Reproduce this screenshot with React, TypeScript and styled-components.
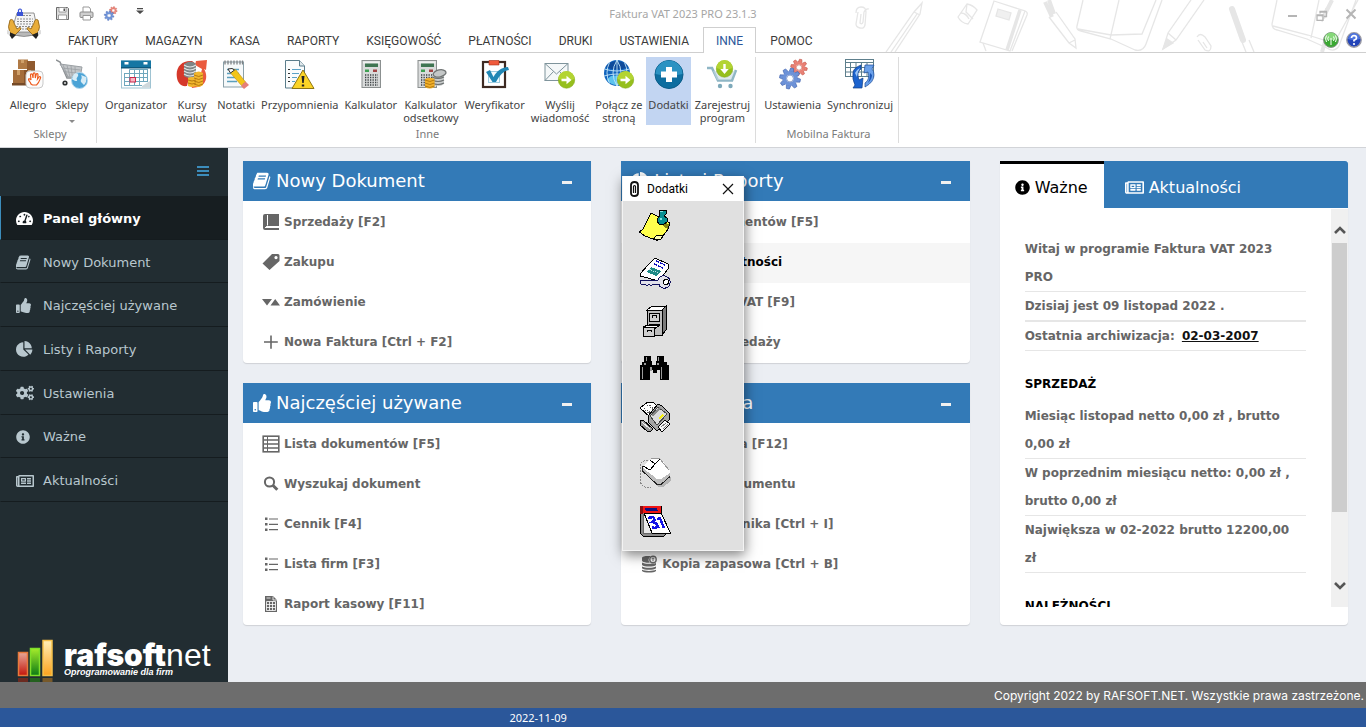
import React from 'react';
import styled, { createGlobalStyle } from 'styled-components';
import {
  FaTachometerAlt,
  FaThumbsUp,
  FaCogs,
  FaInfoCircle,
  FaRegNewspaper,
} from 'react-icons/fa';

const uiFont = "Roboto, 'Noto Sans', sans-serif";
const labelFont = "'Noto Sans', Roboto, sans-serif";
const bodyFont = "'DejaVu Sans', Verdana, sans-serif";

const GlobalStyle = createGlobalStyle`
  *, *::before, *::after { box-sizing: border-box; }
  body { margin: 0; font-family: ${bodyFont}; font-size: 13px; }
  button { border: 0; padding: 0; margin: 0; background: none; color: inherit; font: inherit; }
  ul { list-style: none; margin: 0; padding: 0; }
  h1, h2, h3, p { margin: 0; font-weight: 400; }
  svg { display: block; flex: none; }
`;

/* ---------- layout ---------- */

const Shell = styled.div`
  position: relative;
  display: flex;
  flex-direction: column;
  min-height: 100vh;
`;

const Header = styled.header`
  position: relative;
  display: grid;
  grid-template-columns: 53px 1fr;
  grid-template-rows: 27px 26px;
  background: #fff;
  box-shadow: inset 0 -1px 0 #cfcfcf;
  font-family: ${uiFont};
`;

const HeaderArt = styled.svg`
  position: absolute;
  right: 0;
  top: 0;
`;

const AppButton = styled.button`
  grid-area: 1 / 1 / 3 / 2;
  padding: 6px 0 0 7px;
  align-self: start;
  z-index: 1;
`;

const TitleRow = styled.div`
  grid-area: 1 / 1 / 2 / 3;
  position: relative;
  display: grid;
  grid-template-columns: 1fr auto 1fr;
  align-items: center;
`;

const QuickAccess = styled.div`
  display: flex;
  align-items: center;
  gap: 9px;
  padding-left: 55px;
`;

const QuickMore = styled.button`
  margin-left: 9px;
  padding-bottom: 6px;
`;

const WindowTitle = styled.h1`
  font-family: ${labelFont};
  font-size: 11px;
  line-height: 27px;
  color: #a6a6a6;
`;

const WindowButtons = styled.div`
  display: flex;
  justify-content: flex-end;
  gap: 15px;
  padding-right: 8px;
`;

const TabRow = styled.nav`
  position: relative;
  display: flex;
  align-items: stretch;
  gap: 1px;
  padding: 0 4px 0 2px;
`;

const RibbonTab = styled.button<{ $active?: boolean }>`
  padding: 0 12px;
  font-size: 12px;
  line-height: 26px;
  border: 1px solid ${(p) => (p.$active ? '#cfcfcf' : 'transparent')};
  border-bottom: 0;
  background: ${(p) => (p.$active ? '#fff' : 'transparent')};
  color: ${(p) => (p.$active ? '#2b579a' : '#3b3b3b')};
`;

const HelpButtons = styled.div`
  display: flex;
  align-items: center;
  gap: 7px;
  margin-left: auto;
  padding-bottom: 1px;
`;

const Ribbon = styled.section`
  display: flex;
  height: 95px;
  padding: 4px 0 4px 1px;
  background: #fff;
  border-bottom: 1px solid #d2d4d8;
  font-family: ${labelFont};
`;

const RibbonGroup = styled.div`
  display: flex;
  flex-direction: column;
  justify-content: space-between;
  padding: 0 3px 0 6px;
  border-right: 1px solid #dcdcdc;
`;

const RibbonItems = styled.div`
  display: flex;
  gap: 2px;
`;

const RibbonCaption = styled.div`
  font-size: 11px;
  line-height: 18px;
  padding-bottom: 1px;
  text-align: center;
  color: #7b7b7b;
`;

const RibbonButton = styled.button<{ $active?: boolean }>`
  display: flex;
  flex-direction: column;
  align-items: center;
  min-width: 42px;
  height: 68px;
  padding: 1px 2px 0;
  background: ${(p) => (p.$active ? '#c2d5f2' : 'transparent')};
  color: #444;
`;

const RibbonLabel = styled.span`
  padding-top: 8px;
  font-size: 11px;
  line-height: 13px;
  text-align: center;
  white-space: pre;
`;

const Workspace = styled.div`
  display: flex;
  flex: 1;
`;

const Sidebar = styled.aside`
  display: flex;
  flex-direction: column;
  flex: none;
  width: 228px;
  background: #222d32;
`;

const MenuToggle = styled.button`
  align-self: flex-end;
  height: 48px;
  padding: 0 19px 2px;
`;

const SideMenu = styled.ul`
  display: grid;
  grid-auto-rows: 1fr;
  height: 306px;
`;

const SideItem = styled.li`
  display: flex;
`;

const SideLink = styled.a<{ $active?: boolean }>`
  display: grid;
  grid-template-columns: 27px 1fr;
  align-items: center;
  flex: 1;
  padding: 2px 0 0 15px;
  border-left: 1px solid ${(p) => (p.$active ? '#3c8dbc' : '#222d32')};
  border-bottom: 1px solid #151c1f;
  background: ${(p) => (p.$active ? '#171e21' : '#222d32')};
  color: ${(p) => (p.$active ? '#fff' : '#b8c7ce')};
  font-weight: ${(p) => (p.$active ? 700 : 400)};
  text-decoration: none;
`;

const Brand = styled.div`
  display: flex;
  align-items: flex-end;
  gap: 11px;
  margin-top: auto;
  padding-left: 17px;
`;

const BrandText = styled.div`
  padding-bottom: 4px;
  color: #fff;
`;

const BrandName = styled.div`
  font: 900 30px/24px Inter, sans-serif;
`;

const BrandLight = styled.span`
  font: 400 32px/24px 'Liberation Sans', sans-serif;
`;

const BrandTag = styled.div`
  font: italic 700 9px/11px 'Liberation Sans', sans-serif;
`;

const Main = styled.main`
  display: grid;
  grid-template-columns: repeat(3, minmax(0, 1fr));
  gap: 20px 30px;
  align-content: start;
  flex: 1;
  padding: 13px 18px 20px 15px;
  background: #ebeef3;
`;

const Card = styled.section`
  display: flex;
  flex-direction: column;
  background: #fff;
  border-radius: 0 0 4px 4px;
  box-shadow: 0 1px 1px rgba(0, 0, 0, 0.12);
`;

const CardHeader = styled.header`
  display: flex;
  align-items: center;
  gap: 5px;
  height: 40px;
  padding: 0 19px 0 10px;
  background: #337ab7;
  color: #fff;
`;

const CardTitle = styled.h2`
  flex: 1;
  font-size: 18px;
  line-height: 24px;
`;

const CollapseButton = styled.button`
  padding: 10px 0 8px;
`;

const CollapseMark = styled.span`
  display: block;
  width: 10px;
  height: 3px;
  background: #f0f0f0;
`;

const CardList = styled.ul`
  padding-top: 2px;
`;

const CardItem = styled.li<{ $hover?: boolean }>`
  display: flex;
  height: 40px;
  background: ${(p) => (p.$hover ? '#f6f6f6' : 'transparent')};
`;

const CardLink = styled.a<{ $hover?: boolean }>`
  display: flex;
  align-items: center;
  gap: 4px;
  flex: 1;
  padding: 0 19px 2px;
  font-size: 12px;
  font-weight: 700;
  line-height: 18px;
  color: ${(p) => (p.$hover ? '#000' : '#666')};
  text-decoration: none;
`;

const NewsCard = styled(Card)`
  grid-column: 3;
  grid-row: 1 / span 2;
  padding-bottom: 18px;
`;

const NewsTabs = styled.div`
  display: flex;
  height: 47px;
  background: #337ab7;
  border-radius: 0 3px 0 0;
  margin-bottom: 1px;
`;

const NewsTab = styled.button<{ $active?: boolean }>`
  display: flex;
  align-items: center;
  gap: 5px;
  padding: ${(p) => (p.$active ? '2px 16px 0 15px' : '5px 21px 0')};
  border-top: ${(p) => (p.$active ? '3px solid #000' : '0')};
  background: ${(p) => (p.$active ? '#fff' : 'transparent')};
  color: ${(p) => (p.$active ? '#000' : '#fff')};
  font-size: 16px;
`;

const NewsScroller = styled.div`
  display: flex;
  flex: 1;
  contain: size;
  overflow: hidden;
`;

const NewsBody = styled.div`
  flex: 1;
  padding: 26px 25px 0;
  font-size: 12px;
  font-weight: 700;
  line-height: 28px;
  color: #666;
`;

const NewsLine = styled.p<{ $thick?: boolean }>`
  padding-right: 10px;
  font-weight: 700;
  border-bottom: ${(p) => (p.$thick ? 2 : 1)}px solid #e6e6e6;
`;

const NewsHeading = styled.h3`
  padding: 19px 0 4px;
  font-size: 12px;
  font-weight: 700;
  color: #000;
`;

const NewsLink = styled.a`
  margin-left: 3px;
  color: #111;
`;

const ScrollTrack = styled.div`
  display: flex;
  flex-direction: column;
  align-items: center;
  width: 17px;
  background: #f0f0f0;
`;

const ScrollButton = styled.button<{ $down?: boolean }>`
  padding: ${(p) => (p.$down ? '9px 2px 17px' : '17px 2px 9px')};
`;

const ScrollThumb = styled.div`
  flex: 0 1 269px;
  width: 15px;
  margin-bottom: auto;
  background: #cdcdcd;
`;

const Copyright = styled.footer`
  height: 26px;
  padding-right: 2px;
  background: #6d6d6d;
  color: #fff;
  font: 12px/27px Inter, sans-serif;
  text-align: right;
`;

const StatusBar = styled.div`
  display: grid;
  grid-template-columns: 37% 1fr;
  height: 19px;
  background: #2b579a;
  color: #fff;
  font: 11px/20px ${labelFont};
`;

const StatusDate = styled.span`
  grid-column: 2;
  padding-left: 4px;
`;

const ToolWindow = styled.section`
  position: absolute;
  left: 622px;
  top: 176px;
  width: 122px;
  background: #e0e0e0;
  border: 1px solid #f3f3f3;
  border-top: 0;
  box-shadow: 1px 4px 12px rgba(0, 0, 0, 0.5);
`;

const ToolTitleBar = styled.header`
  display: flex;
  align-items: center;
  height: 25px;
  padding: 0 9px 0 6px;
  gap: 7px;
  background: #fff;
`;

const ToolTitle = styled.h2`
  flex: 1;
  font: 12px/24px ${uiFont};
  color: #000;
`;

const ToolList = styled.div`
  display: grid;
  justify-items: start;
  gap: 16px;
  padding: 8px 16px 13px;
`;

const ToolButton = styled.button<{ $spaced?: boolean }>`
  margin-top: ${(p) => (p.$spaced ? 8 : 0)}px;
`;

/* ---------- small glyphs ---------- */

const BookSlant = ({ size = 16 }: { size?: number }) => (
  <svg width={size} height={size} viewBox="64 64 1664 1664" fill="currentColor">
    <path d="M1639 478q40 57 18 129l-275 906q-19 64-76.500 107.500t-122.500 43.500h-923q-77 0-148.500-53.500t-99.500-131.500q-24-67-2-127 0-4 3-27t4-37q1-8-3-21.500t-3-19.500q2-11 8-21t16.500-23.500 16.500-23.500q23-38 45-91.500t30-91.500q3-10 .5-30t-.5-28q3-11 17-28t17-23q21-36 42-92t25-90q1-9-2.500-32t.5-28q4-13 22-30.500t22-22.500q19-26 42.500-84.500t27.500-96.500q1-8-3-25.500t-2-26.500q2-8 9-18t18-23 17-21q8-12 16.500-30.500t15-35 16-36 19.500-32 26.500-23.500 36-11.500 47.500 5.500l-1 3q38-9 51-9h761q74 0 114 56t18 130l-274 906q-36 119-71.500 153.500t-128.500 34.500h-869q-27 0-38 15-11 16-1 43 24 70 144 70h923q29 0 56-15.500t35-41.500l300-987q7-22 5-57 38 15 59 43zm-1064 2q-4 13 2 22.500t20 9.500h608q13 0 25.500-9.500t16.500-22.500l21-64q4-13-2-22.500t-20-9.500h-608q-13 0-25.500 9.500t-16.500 22.500zm-83 256q-4 13 2 22.500t20 9.500h608q13 0 25.500-9.500t16.500-22.500l21-64q4-13-2-22.500t-20-9.500h-608q-13 0-25.500 9.500t-16.500 22.500z" />
  </svg>
);

const PieIcon = ({ size = 16 }: { size?: number }) => (
  <svg width={size} height={size} viewBox="0 0 1792 1792" fill="currentColor">
    <path d="M768 890l546 546q-106 108-247.500 168t-298.500 60q-209 0-385.500-103t-279.500-279.500-103-385.500 103-385.500 279.500-279.500 385.500-103v762zm187 6h773q0 157-60 298.500t-168 247.500zm709-128h-768v-768q209 0 385.500 103t279.500 279.500 103 385.500z" />
  </svg>
);

type GlyphName = 'book' | 'tag' | 'swap' | 'plus' | 'table' | 'search' | 'bullets' | 'sheet' | 'backup';

const glyphs: Record<GlyphName, React.ReactNode> = {
  book: (
    <>
      <path d="M3 1h14v12H4.500a1 1 0 0 0 0 1.800H17V17H3a2 2 0 0 1-2-2V3a2 2 0 0 1 2-2z" />
      <path d="M5.500 2v10.500M3 14.500h14" stroke="#fff" strokeWidth="1" />
    </>
  ),
  tag: <path fillRule="evenodd" d="M10 1h6a1.500 1.500 0 0 1 1.500 1.500V8L7.500 17 .5 10.500zM14 3a1.600 1.600 0 1 0 .01 0z" />,
  swap: <path d="M0 6h10L5 12.500zM8.500 12.500h9.500L13.200 6z" />,
  plus: <path d="M8.200 2.500h1.600V8.200h6v1.600h-6v6H8.200v-6H2V8.200h6.200z" />,
  table: (
    <>
      <rect x="1.200" y="1.200" width="15.600" height="15.600" fill="none" stroke="currentColor" strokeWidth="1.600" />
      <path d="M1 5h16M1 9h16M1 13h16" stroke="currentColor" strokeWidth="1.500" />
      <path d="M5.500 1v16" stroke="currentColor" />
    </>
  ),
  search: (
    <>
      <circle cx="7.500" cy="7" r="4.600" fill="none" stroke="currentColor" strokeWidth="2" />
      <path d="M10.800 10.300l4.500 4.500" stroke="currentColor" strokeWidth="3" />
    </>
  ),
  bullets: (
    <>
      <path d="M3 2.500h2.500V5H3zM3 8h2.500v2.500H3zM3 13.500h2.500V16H3z" />
      <path d="M7 4h9M7 9.300h9M7 14.600h9" stroke="currentColor" strokeWidth="1.200" />
    </>
  ),
  sheet: (
    <>
      <path d="M3 1h8l4 4v12H3z" />
      <path d="M11 1.500V5h4M4.500 3h4M4.500 6.500h9v9h-9zM4.500 9.500h9M4.500 12.500h9M7.500 6.500v9M10.500 6.500v9" fill="none" stroke="#fff" strokeWidth=".8" />
    </>
  ),
  backup: (
    <>
      <path d="M2 3c0-2 7-2.500 9-1.500C8 3 8 6 10 7.500c-3 .6-8 0-8-2zM2 7.500C4 9 10 9 12 8.500c1 .2 3 0 4-.5v2c-2 2-12 2-14 0zM2 11.500c3 1.700 11 1.700 14 0v1.800c-2 2-12 2-14 0zM2 14.800c3 1.500 11 1.500 14 0V16c-2 2-12 2-14 0z" />
      <circle cx="13" cy="4.500" r="3.200" fill="none" stroke="currentColor" strokeWidth="1.400" />
      <path d="M13 2.800v3.400M11.500 4.200L13 2.700l1.500 1.500" fill="none" stroke="currentColor" />
    </>
  ),
};

const Glyph = ({ name }: { name: GlyphName }) => (
  <svg width="18" height="18" viewBox="0 0 18 18" fill="currentColor">
    {glyphs[name]}
  </svg>
);

const GearArt = ({ cx, cy, r, fill, stroke }: { cx: number; cy: number; r: number; fill: string; stroke: string }) => (
  <g stroke={stroke} strokeWidth=".6">
    {[0, 45, 90, 135, 180, 225, 270, 315].map((a) => (
      <path
        key={a}
        transform={`rotate(${a + 12} ${cx} ${cy})`}
        d={`M${cx - r * 0.24} ${cy - r * 0.7}L${cx - r * 0.16} ${cy - r * 1.1}h${r * 0.32}L${cx + r * 0.24} ${cy - r * 0.7}z`}
        fill={fill}
      />
    ))}
    <circle cx={cx} cy={cy} r={r * 0.58} fill="none" stroke={fill} strokeWidth={r * 0.38} />
    <circle cx={cx} cy={cy} r={r * 0.36} fill="#fff" />
  </g>
);

/* ---------- ribbon icons ---------- */

const GreenArrow = ({ down, x, y }: { down?: boolean; x: number; y: number }) => (
  <g>
    <circle cx={x} cy={y} r="8.200" fill="#96bf1d" stroke="#83a818" strokeWidth=".6" />
    <path d={`M${x - 8} ${y - 1}a8 8 0 0 1 16 0q-8 3-16 0z`} fill="#b3d433" />
    <path
      transform={down ? `rotate(90 ${x} ${y})` : undefined}
      d={`M${x - 5} ${y - 1.200}h5v-3l5 4.200-5 4.200v-3h-5z`}
      fill="#fff"
    />
  </g>
);

const CalcArt = ({ x }: { x: number }) => (
  <g>
    <rect x={x} y="2.500" width="18.500" height="27" fill="#d9dbdb" stroke="#8b9090" />
    <path d={`M${x + 1} 3.500h16.500v2H${x + 1}z`} fill="#f0f1f1" />
    <path d={`M${x + 3} 5.500h13v3.500H${x + 3}z`} fill="#3f7552" />
    <path d={`M${x + 3} 11.500h4v2.500h-4z`} fill="#3da052" />
    <path d={`M${x + 11} 11.500h4v2.500h-4z`} fill="#a14343" />
    {[17, 19.5, 22, 24.5, 27].map((y) => (
      <path key={y} d={`M${x + 3} ${y}h13`} stroke="#3c4244" strokeWidth="1.300" strokeDasharray="1.300 1.200" />
    ))}
  </g>
);

type RibbonIconName =
  | 'boxes' | 'cart' | 'calendar' | 'coins' | 'notes' | 'warning' | 'calc' | 'calcCoins'
  | 'clipboard' | 'mail' | 'globe' | 'add' | 'register' | 'gears' | 'sync';

const ribbonIcons: Record<RibbonIconName, React.ReactNode> = {
  boxes: (
    <>
      <path d="M5 1.500h10V11H5z" fill="#b07a45" transform="translate(1)" />
      <path d="M15 3h8v9h-8z" fill="#8f5a2f" />
      <path d="M1 12h11v13H1z" fill="#a46d3b" />
      <path d="M12 12h11v13H12z" fill="#87542b" />
      <path d="M5 12h3v5H5zM9 2h3v3H9zM16 12h3v5h-3z" fill="#cfa06a" />
      <path d="M0 25h20v2.500H0z" fill="#754a27" />
      <rect x="14" y="13" width="17" height="17" rx="4" fill="#fbfbfb" stroke="#c9c9c9" />
      <path
        d="M19 26c-1-3-2.500-3-2.500-4.500s2-.5 2.500.5l-.5-5c0-1.500 1.700-1.500 2 0l.5 3 .2-4c0-1.600 1.900-1.600 2 0l.1 4 .9-3.600c.4-1.300 2-.9 1.800.5L25.500 21l1.500-2c.8-1 2 0 1.500 1-1 2.500-1.500 5-4 7h-4z"
        fill="#fff"
        stroke="#ee5a1c"
        strokeWidth="1.200"
      />
    </>
  ),
  cart: (
    <>
      <path d="M0 2l4 2 7 16h14" fill="none" stroke="#8d9194" strokeWidth="1.500" />
      <path d="M4 6l22 3-2 11-12-1z" fill="#c3c6c9" stroke="#9a9fa3" />
      <path d="M7 7l5 12M11 7.500l3 11.500M15 8l1.500 11.500M19 8.500l.5 11.500M6 10l18.500 2M7.500 13.500l16.500 2" stroke="#9a9fa3" strokeWidth=".8" />
      <circle cx="9" cy="25" r="2.600" fill="#2e3133" />
      <circle cx="9" cy="25" r="1" fill="#ddd" />
      <circle cx="23.500" cy="22.500" r="8" fill="#4ba3d6" stroke="#b4d9ee" />
      <path d="M18 16c3-2 5 0 4 2s-2 2-1 4-3 1-5-1zM25 17l5 2c1 3 0 6-2 8l-3-3c-1-3 2-3 0-7z" fill="#d7ecf6" />
    </>
  ),
  calendar: (
    <>
      <rect x="1.500" y="3" width="29" height="27" fill="#fff" stroke="#9fc3d2" />
      <path d="M1 2.500h30V9H1z" fill="#1576a3" />
      <path d="M4.500 4h4v2.500h-4zM23.500 4h4v2.500h-4z" fill="#fff" />
      <path d="M1 9h30v1.500H1z" fill="#0d587c" />
      <path d="M9.500 11.500h18.500M4 15.500h24M4 19.500h24M4 23.500h24M4 27.500h18M4.500 15v12M9.500 11.500v16M14.500 11.500v16M19.500 11.500v16M23.500 11.500v12M27.500 11.500v12" stroke="#6fa7bd" />
      <rect x="10" y="19.500" width="5.500" height="4.500" fill="#f9b5c2" stroke="#c8274b" />
      <path d="M22 28l8-5v6.500h-8z" fill="#cfd8dc" />
    </>
  ),
  coins: (
    <>
      <path d="M1 20C-1 9 6 2 16 3l4 3-9 5-2 6 4 3-2 8C5 29 2 25 1 20z" fill="#d5382a" />
      <path d="M20 3l11-1-1 10-2-1c5 8 1 17-6 18l-6 1-2-7 10-4 2-8-7-4z" fill="#ea5a3e" />
      <path d="M8 6q7-5 12 0v12q-6 4-12 0z" fill="#7f8687" />
      <path d="M8 7q6 4 12 0M8 10q6 4 12 0M8 13q6 4 12 0M8 16q6 4 12 0" fill="none" stroke="#e3e6e6" strokeWidth="1.200" />
      <path d="M18 15q5-3 9 0v12q-5 4-9 0zM12 20q4-2 8 0v8q-4 2-8 0z" fill="#f1b62c" />
      <path d="M18 17q5 3 9 0M18 20q5 3 9 0M18 23q5 3 9 0M18 26q5 3 9 0M12 22q4 2 8 0M12 25q4 2 8 0" fill="none" stroke="#b67a10" />
    </>
  ),
  notes: (
    <>
      <rect x="3.500" y="4" width="20" height="25" fill="#f6f9fa" stroke="#8aa0a9" />
      <path d="M5 2.500v4M8 2.500v4M11 2.500v4M14 2.500v4M17 2.500v4M20 2.500v4M22.500 2.500v4" stroke="#7d8285" strokeWidth="1.300" />
      <path d="M7 11.500h12M7 15.500h12M7 19.500h12M7 23.500h10" stroke="#5c9fbd" strokeWidth="1.300" />
      <path d="M9 12l3-1 4 1 9.500 12-4 3.500L11 15.500z" fill="#f3c518" stroke="#c08f0d" strokeWidth=".6" />
      <path d="M8 11l4-.5 2.500 1.500-4 3z" fill="#fff" stroke="#333" />
      <path d="M21 28l4.500-4.500 3.500 3.500-5 4z" fill="#e58078" />
    </>
  ),
  warning: (
    <>
      <path d="M1.500 2.500h14l5 5.500v22h-19z" fill="#fafcfc" stroke="#5b7d8b" />
      <path d="M15.500 2.500V8h5" fill="#dfe8ec" stroke="#5b7d8b" />
      <path d="M4 11.500h2M4 15.500h2M4 19.500h2M4 23.500h2" stroke="#333" />
      <path d="M8 11.500h9M8 15.500h7M8 19.500h5M8 23.500h3" stroke="#5aa2c6" />
      <path d="M19 12l11 18.500H8z" fill="#fbd426" stroke="#8d7514" strokeLinejoin="round" />
      <path d="M17.500 18h3l-.8 7h-1.400zM17.800 26.500h2.400v2h-2.400z" fill="#222" />
    </>
  ),
  calc: <CalcArt x={7} />,
  calcCoins: (
    <>
      <CalcArt x={3} />
      <path d="M17 17q5-4 12 0v9q-5 4-12 0z" fill="#c9cccc" />
      <path d="M17 19q6 3 12 0M17 22q6 3 12 0M17 25q6 3 12 0" fill="none" stroke="#6c7070" strokeWidth="1.200" />
      <ellipse cx="24.500" cy="15.500" rx="6.500" ry="3.500" fill="#c4c7c7" stroke="#6f7373" strokeWidth="1.300" transform="rotate(-12 24 15)" />
      <path d="M10 21q5-2.500 9.500 0v8q-5 3-9.500 0z" fill="#f1b02a" />
      <path d="M10 22q5 3 9.500 0M10 25q5 3 9.500 0M10 28q5 3 9.500 0" fill="none" stroke="#b67a10" />
    </>
  ),
  clipboard: (
    <>
      <rect x="4" y="4" width="22" height="25" fill="#fff" stroke="#3d2a22" strokeWidth="2.200" />
      <path d="M10 2.500h10v4.500H10z" fill="#f05a3c" stroke="#a83019" strokeWidth=".6" />
      <rect x="9.500" y="13.500" width="11" height="11" fill="#f2fafd" stroke="#9ccbdf" />
      <path d="M7 14l4-2 3.500 7C18 13 22 9.500 29 9l1 3c-6 1-9 5-13 12h-3.500z" fill="#2187b4" />
    </>
  ),
  mail: (
    <>
      <rect x="1" y="5.500" width="23" height="17" fill="#f5f8f9" stroke="#7f949c" />
      <path d="M1 5.500L12.500 16 24 5.500M1 22.500l8.500-9M24 22.500l-8.500-9" fill="none" stroke="#7f949c" />
      <GreenArrow x={22.500} y={22} />
    </>
  ),
  globe: (
    <>
      <circle cx="14" cy="15" r="13" fill="#1264bd" />
      <path d="M3 9a13 13 0 0 1 22 0Q14 14 3 9z" fill="#0e4a9a" />
      <path d="M4 22q4-7 14-3l6 4a13 13 0 0 1-20-1z" fill="#5cc3ee" />
      <path d="M14 2v26M6.500 4.500q-5 10 0 21M21.500 4.500q5 10 0 21M1.500 11q12 4 25 0M1 18q13-4 26 0M14 2q-8 13 0 26M14 2q8 13 0 26" fill="none" stroke="#bfe4f8" strokeWidth=".9" />
      <GreenArrow x={22.500} y={22} />
    </>
  ),
  add: (
    <>
      <circle cx="16" cy="16.500" r="14" fill="#0d6d9f" stroke="#0b5c88" />
      <path d="M2.500 16a13.500 13.500 0 0 1 27 0q-13.500 3-27 0z" fill="#2b92c2" />
      <path d="M13 9h6v4.500h5v6h-5V24h-6v-4.500H8v-6h5z" fill="#fff" />
    </>
  ),
  register: (
    <>
      <path d="M1 10h5l6 12.500h14L30 12" fill="none" stroke="#8fb6c5" strokeWidth="2.600" />
      <path d="M7 13h22l-4 9H11z" fill="#c6dbe3" opacity=".6" />
      <circle cx="14" cy="28" r="2.200" fill="#7ea9ba" />
      <circle cx="24.500" cy="28" r="2.200" fill="#7ea9ba" />
      <GreenArrow x={18.500} y={11} down />
    </>
  ),
  gears: (
    <>
      <GearArt cx={22} cy={9.500} r={7.500} fill="#ea8175" stroke="#c4564a" />
      <GearArt cx={13} cy={20.500} r={9.500} fill="#6d92d8" stroke="#3f62ad" />
    </>
  ),
  sync: (
    <>
      <rect x="1.500" y="1.500" width="28" height="17" fill="#fff" stroke="#5e7f8c" />
      <path d="M2 4.500h27.500M2 9.500h27.500M2 14h27.500M6.500 4v14.500M12 4v14.500M17.500 4v14.500M23 4v14.500" stroke="#5e7f8c" />
      <path d="M9 15q0-5 8-8v4q-5 3-2 11l4-2-1 10H9l2-3q-3-6-2-12z" fill="#1c63cf" stroke="#123f87" strokeWidth=".7" />
      <path d="M11 15q1-3 5-5-3 4-3 9z" fill="#9cc6f7" />
      <path d="M30 17q0 7-9 12v-4q5-3 3-11l-4 1 1-8h9l-2 4q2 2 2 6z" fill="#6aa0ea" stroke="#1d4a95" strokeWidth=".7" />
      <path d="M28 17q0 4-4 8 2-4 2-10z" fill="#1c55b5" />
    </>
  ),
};

const RibbonIcon = ({ name }: { name: RibbonIconName }) => (
  <svg width="32" height="32" viewBox="0 0 32 32">
    {ribbonIcons[name]}
  </svg>
);

/* ---------- tool window icons ---------- */

type ToolIconName = 'note' | 'key' | 'cabinet' | 'binoculars' | 'printer' | 'mouse' | 'date';

const toolIcons: Record<ToolIconName, React.ReactNode> = {
  note: (
    <>
      <path d="M12 4l19 10-2 6-5 7-2 3-4 1.500L6 27 .5 23 4 20z" fill="#ffff4d" stroke="#000" />
      <path d="M25 14l5 1-1 5-5-3z" fill="#84840f" />
      <path d="M15 29.500l2-2.500 7-1-2 4-4 1z" fill="#ffffb0" stroke="#000" />
      <path d="M20 1h7v4l-2 2 3 2v4l-3 2h-5l-2-3 1-3 2-2-1-2z" fill="#078f93" stroke="#000" />
      <path d="M21 2h3v1h-3zM21 9h2v2h-2z" fill="#7fe3e4" />
    </>
  ),
  key: (
    <>
      <path d="M16 1l13 6v5L20 24 1 19v-2l8-9z" fill="#fff" stroke="#000" />
      <path d="M17 4l9 4M15 7l9 4" stroke="#1010c0" strokeWidth="1.500" strokeDasharray="3 1" />
      <path d="M12 10l10 4-5 5-9-4z" fill="#1d8a86" />
      <path d="M10.500 12.500l9 3.500" stroke="#bfe6e4" strokeDasharray="1 1" />
      <path d="M1 23h18q2-5 7-4 6 2 5 7-1 6-7 5-4-1-4-4H14l-2 2-2-2-2 2-2-2H2z" fill="#e2e2ea" stroke="#10105c" />
      <circle cx="27" cy="25" r="2.500" fill="#fff" stroke="#000" />
    </>
  ),
  cabinet: (
    <>
      <path d="M8 5l5-4h14l-4 4z" fill="#fff" stroke="#000" />
      <path d="M23 5l4-4v24l-4 5z" fill="#7c7c7c" stroke="#000" />
      <path d="M8 5h15v25H8z" fill="#bdbdbd" stroke="#000" />
      <path d="M10.500 8.500h10v8h-10z" fill="#cfcfcf" stroke="#000" />
      <path d="M13.500 12.500v-2h4v2M10 19.500h11" fill="none" stroke="#000" strokeWidth="1.500" />
      <path d="M4 22l5-2h12l-6 4z" fill="#fff" stroke="#000" />
      <path d="M4 22.500h11v9H4z" fill="#cfcfcf" stroke="#000" />
      <path d="M8 27v-1.500h4V27" fill="none" stroke="#000" />
    </>
  ),
  binoculars: (
    <>
      <path d="M5 3h7v5h1v4h4V8h1V3h7v6h3v3h2v15h-9V17h-3v3h-4v-3h-3v10H1V12h2V9h2z" fill="#000" />
      <path d="M7.500 4v4M19.500 4v4M3.500 14v12M12 14v4M22.500 14v12M6 10v2M19 10v2" stroke="#9a9a9a" strokeWidth="1.400" />
    </>
  ),
  printer: (
    <>
      <path d="M1 7l8-6 6 1 5 5-9 9z" fill="#fff" stroke="#000" />
      <path d="M5 7l8 6M8 4l8 6M6 9l5 4M10 4l7 5" stroke="#555" strokeDasharray="2 1" />
      <path d="M9 15l10-12 4 2 7 7v7L18 30l-8-8z" fill="#a6a6a6" stroke="#000" />
      <path d="M11 15l8-9 9 7-10 11z" fill="#dcdcdc" stroke="#444" />
      <path d="M13 14l7-8 2 1-8 9z" fill="#8a8a8a" />
      <path d="M19 17l4-4 2 1.500-4 4z" fill="#f4ee12" />
      <path d="M1 20l3-1 10 9-3 3-3-1-7-6z" fill="#9a9a9a" stroke="#000" />
      <path d="M3 21l8 7" stroke="#eee" />
      <path d="M19 26l7-7 5 4-8 8z" fill="#f3f3f3" stroke="#000" />
      <path d="M22 26l5-4M24 28l5-5" stroke="#777" />
    </>
  ),
  mouse: (
    <>
      <path d="M9 3Q1 4 1 9t1 9q-2 8 2 11 3 2 8 2" fill="none" stroke="#888" strokeDasharray="2 1" />
      <path d="M5 13l14 17h5l8-6v-4z" fill="#b4b4b4" />
      <path d="M4 9l7-6 5-2 6 1 9 12v5l-9 6h-4L4 13z" fill="#fff" />
      <path d="M12 2l4-1 5 1 9 11" fill="none" stroke="#999" />
      <path d="M4 11l14 11h4l9-6v4l-9 7h-4L4 14z" fill="#bdbdbd" />
      <path d="M3.500 8.500V14L18 27.500h4l9-8" fill="none" stroke="#222" />
      <path d="M11 3l5 4 5-5M16 7l-5 6M4 9l7 4" fill="none" stroke="#000" />
    </>
  ),
  date: (
    <>
      <path d="M1 3l2-2h19v7l6 20-3 3H4l-3-3z" fill="#8a8a8a" stroke="#000" />
      <path d="M4 9h3l6 19H4z" fill="#e8e8e8" stroke="#666" />
      <path d="M5 8h17l9.500 20H13z" fill="#fff" stroke="#000" />
      <path d="M1 1h3v8H1z" fill="#8a0d10" />
      <path d="M4 1h18v7H4z" fill="#f01515" />
      <path d="M6 3h12l1 3H7z" fill="#10107e" />
      <path d="M9 13l5-1 2 3-3 2 4 1 2 4-4 1-2-1M18 14l3-1 4 10" fill="none" stroke="#1414e6" strokeWidth="2.400" />
    </>
  ),
};

/* ---------- data ---------- */

const ribbonTabs = [
  'FAKTURY', 'MAGAZYN', 'KASA', 'RAPORTY', 'KSIĘGOWOŚĆ', 'PŁATNOŚCI', 'DRUKI', 'USTAWIENIA', 'INNE', 'POMOC',
];

const ribbonGroups: { caption: string; items: { icon: RibbonIconName; label: string; menu?: boolean }[] }[] = [
  {
    caption: 'Sklepy',
    items: [
      { icon: 'boxes', label: 'Allegro' },
      { icon: 'cart', label: 'Sklepy', menu: true },
    ],
  },
  {
    caption: 'Inne',
    items: [
      { icon: 'calendar', label: 'Organizator' },
      { icon: 'coins', label: 'Kursy\nwalut' },
      { icon: 'notes', label: 'Notatki' },
      { icon: 'warning', label: 'Przypomnienia' },
      { icon: 'calc', label: 'Kalkulator' },
      { icon: 'calcCoins', label: 'Kalkulator\nodsetkowy' },
      { icon: 'clipboard', label: 'Weryfikator' },
      { icon: 'mail', label: 'Wyślij\nwiadomość' },
      { icon: 'globe', label: 'Połącz ze\nstroną' },
      { icon: 'add', label: 'Dodatki' },
      { icon: 'register', label: 'Zarejestruj\nprogram' },
    ],
  },
  {
    caption: 'Mobilna Faktura',
    items: [
      { icon: 'gears', label: 'Ustawienia' },
      { icon: 'sync', label: 'Synchronizuj' },
    ],
  },
];

const sideItems: { icon: React.ReactNode; label: string }[] = [
  { icon: <FaTachometerAlt size={17} />, label: 'Panel główny' },
  { icon: <BookSlant size={15} />, label: 'Nowy Dokument' },
  { icon: <FaThumbsUp size={15} />, label: 'Najczęściej używane' },
  { icon: <PieIcon size={17} />, label: 'Listy i Raporty' },
  { icon: <FaCogs size={18} />, label: 'Ustawienia' },
  { icon: <FaInfoCircle size={14} />, label: 'Ważne' },
  { icon: <FaRegNewspaper size={18} />, label: 'Aktualności' },
];

const cards: { title: string; icon: React.ReactNode; items: [GlyphName, string][]; hover?: number }[] = [
  {
    title: 'Nowy Dokument',
    icon: <BookSlant size={18} />,
    items: [
      ['book', 'Sprzedaży [F2]'],
      ['tag', 'Zakupu'],
      ['swap', 'Zamówienie'],
      ['plus', 'Nowa Faktura [Ctrl + F2]'],
    ],
  },
  {
    title: 'Listy i Raporty',
    icon: <PieIcon size={18} />,
    hover: 1,
    items: [
      ['table', 'Lista dokumentów [F5]'],
      ['table', 'Raporty płatności'],
      ['sheet', 'Deklaracje VAT [F9]'],
      ['sheet', 'Raport sprzedaży'],
    ],
  },
  {
    title: 'Najczęściej używane',
    icon: <FaThumbsUp size={18} />,
    items: [
      ['table', 'Lista dokumentów [F5]'],
      ['search', 'Wyszukaj dokument'],
      ['bullets', 'Cennik [F4]'],
      ['bullets', 'Lista firm [F3]'],
      ['sheet', 'Raport kasowy [F11]'],
    ],
  },
  {
    title: 'Ustawienia',
    icon: <FaCogs size={18} />,
    items: [
      ['table', 'Konfiguracja [F12]'],
      ['sheet', 'Wydruk dokumentu'],
      ['bullets', 'Eksport cennika [Ctrl + I]'],
      ['backup', 'Kopia zapasowa [Ctrl + B]'],
    ],
  },
];

const tools: { icon: ToolIconName; label: string; spaced?: boolean }[] = [
  { icon: 'note', label: 'Notatka' },
  { icon: 'key', label: 'Hasła' },
  { icon: 'cabinet', label: 'Archiwum' },
  { icon: 'binoculars', label: 'Szukaj' },
  { icon: 'printer', label: 'Drukarka' },
  { icon: 'mouse', label: 'Mysz', spaced: true },
  { icon: 'date', label: 'Kalendarz' },
];

/* ---------- header art ---------- */

const Sketches = () => (
  <HeaderArt width="516" height="52" viewBox="850 0 516 52" fill="none" stroke="#e6e6e6" strokeWidth="1.300">
    <path d="M856 13q0-6 5-6t5 5l-1 13q-1 4-5 3t-4-4l2-12M861 14l-1 9q2 2 3-1l1-10q2-4 5-3" />
    <path d="M886 52l28-40 8-9-2 11-25 38M891 52l26-38M914 12l6 3" />
    <path d="M958 17l9-13q6 1 10 6l-9 14q-7-1-10-7zM967 4l-1 8 7 7M961 13q5 0 8 6" />
    <path d="M994 1l31 10-15 40-30-9zM1025 11q3 1 2 4l-15 36M983 43l3 8" />
    <path d="M998 9l13 4-2 7-13-4z" fill="#f0f0f0" />
    <path d="M1020 10l-13 40" strokeWidth="3.500" />
    <path d="M1045 2l7 15M1049 0l5 14" strokeWidth="4" />
    <path d="M1049 17l20 26 7 5-1-9-19-27M1069 43l6-3" />
    <path d="M1083 0l-6 26q-1 4 4 5l30 8 24 11q8 2 11-6l16-44M1119 0l-9 39M1078 29l33 6 31-1 14-34" />
    <path d="M1191 0l-23 33-5 16 13-9 28-40M1168 33l8 7" />
    <path d="M1163 49l4-10 6 4z" fill="#e6e6e6" />
    <path d="M1197 37q3-5 8 0l6 9q0 7-6 4l-7-10M1203 42l4 6" />
    <path d="M1232 9l11 31" strokeWidth="6" strokeLinecap="round" />
    <path d="M1242 42l4 10M1249 40l5 12" />
    <path d="M1277 0l-5 24q0 5 5 6l30 9 20 9q7 5 12-2l17-46M1273 26l35 9 22 7 8-6 20-36M1319 0l-8 38M1326 8l-4 14" />
    <path d="M1332 0l-9 18M1325 42l-3 10" strokeWidth="4" />
  </HeaderArt>
);

/* ---------- page ---------- */

export default function App() {
  return (
    <Shell>
      <GlobalStyle />
      <Header>
        <Sketches />
        <TitleRow>
          <QuickAccess>
            <button aria-label="Zapisz">
              <svg width="15" height="15" viewBox="0 0 15 15">
                <path d="M1.500 1.500h11l1 1v11h-12z" fill="#dcdcdc" stroke="#6b6b6b" />
                <path d="M4 1.500h7V6H4zM3.500 9h8v4.500h-8z" fill="#fff" stroke="#8a8a8a" strokeWidth=".8" />
                <path d="M8.500 2.500h1.500V5H8.500z" fill="#555" />
              </svg>
            </button>
            <button aria-label="Drukuj">
              <svg width="15" height="15" viewBox="0 0 15 15">
                <path d="M4 1h6l1.500 2v4H4z" fill="#fff" stroke="#999" />
                <rect x="1" y="6" width="13" height="5.500" rx="1" fill="#cfcfcf" stroke="#8b8b8b" />
                <path d="M4 9.500h7.500v4.500H4z" fill="#fff" stroke="#999" />
              </svg>
            </button>
            <button aria-label="Ustawienia">
              <svg width="15" height="15" viewBox="0 0 32 32">
                {ribbonIcons.gears}
              </svg>
            </button>
            <QuickMore aria-label="Więcej">
              <svg width="8" height="6" viewBox="0 0 8 6">
                <path d="M1 0h6v1.200H1zM0 2.500h8L4 6z" fill="#4a4a4a" />
              </svg>
            </QuickMore>
          </QuickAccess>
          <WindowTitle>Faktura VAT 2023 PRO 23.1.3</WindowTitle>
          <WindowButtons>
            <button aria-label="Minimalizuj">
              <svg width="14" height="14" viewBox="0 0 14 14">
                <path d="M2 9h9" stroke="#b5b5b5" strokeWidth="2" />
              </svg>
            </button>
            <button aria-label="Przywróć">
              <svg width="14" height="14" viewBox="0 0 14 14" fill="none" stroke="#b5b5b5" strokeWidth="1.300">
                <path d="M2 8h6v5.300H2zM2 8.700h6M5 6.500V4.500h6.500v5H9M5 5.200h6" />
              </svg>
            </button>
            <button aria-label="Zamknij">
              <svg width="14" height="14" viewBox="0 0 14 14">
                <path d="M2.500 2.500l9 9M11.500 2.500l-9 9" stroke="#b5b5b5" strokeWidth="2" />
              </svg>
            </button>
          </WindowButtons>
        </TitleRow>
        <AppButton aria-label="Faktura VAT">
          <svg width="34" height="34" viewBox="0 0 34 34">
            <path d="M10 7h17l4 20H4z" fill="#f4f4f4" stroke="#777" strokeWidth=".8" />
            <path d="M16 9.500h9M10 13h16M10 15.500h16M10 18h16M9 20.500h17M9 23h18" stroke="#8d8d8d" strokeDasharray="2 1" />
            <path d="M7 26h20v3q-10 3-20 0z" fill="#b9b9b9" stroke="#666" strokeWidth=".6" />
            <path d="M3 14q3-2 4 3l3 6q4-3 4 0l-6 6-5-2q-3-6 0-13zM31 14q-3-2-4 3l-3 6q-4-3-4 0l6 6 5-2q3-6 0-13z" fill="#e9ad3a" stroke="#8a5d12" strokeWidth=".8" />
            <path d="M0 25l9 4-4 4zM34 25l-9 4 4 4z" fill="#222" />
            <path d="M0 24l3 1v4l-3-1zM34 24l-3 1v4l3-1z" fill="#ddd" />
            <rect x="10" y="6" width="6" height="4" fill="#3b54d6" />
            <path d="M11.500 6V4q1.500-2 3 0v2" fill="none" stroke="#3b54d6" strokeWidth="1.200" />
          </svg>
        </AppButton>
        <TabRow>
          {ribbonTabs.map((t) => (
            <RibbonTab key={t} $active={t === 'INNE'}>{t}</RibbonTab>
          ))}
          <HelpButtons>
            <button aria-label="Połączenie">
              <svg width="16" height="16" viewBox="0 0 16 16">
                <circle cx="8" cy="8" r="7.400" fill="#3aa832" stroke="#87938a" />
                <path d="M1.500 7a6.500 6.500 0 0 1 13 0q-6.500 2-13 0z" fill="#86d87a" />
                <path d="M8 6v7M5.500 4.500q-1.500 2 0 4.500M10.500 4.500q1.500 2 0 4.500M3.500 3.500q-2 3 0 6.500M12.500 3.500q2 3 0 6.500" fill="none" stroke="#fff" />
              </svg>
            </button>
            <button aria-label="Pomoc">
              <svg width="16" height="16" viewBox="0 0 16 16">
                <circle cx="8" cy="8" r="7.200" fill="#2344b8" stroke="#9b9ba5" strokeWidth="1.400" />
                <path d="M2 7a6 6 0 0 1 12 0q-6 2-12 0z" fill="#4e74de" />
                <path d="M5.500 6q0-2.300 2.500-2.300T10.500 6Q10.500 7.200 8 8.300V9.600" fill="none" stroke="#fff" strokeWidth="1.700" />
                <circle cx="8" cy="12" r="1.100" fill="#fff" />
              </svg>
            </button>
          </HelpButtons>
        </TabRow>
      </Header>

      <Ribbon>
        {ribbonGroups.map((g) => (
          <RibbonGroup key={g.caption}>
            <RibbonItems>
              {g.items.map((it) => (
                <RibbonButton key={it.label} $active={it.icon === 'add'}>
                  <RibbonIcon name={it.icon} />
                  <RibbonLabel>{it.label}</RibbonLabel>
                  {it.menu && (
                    <svg width="6" height="12" viewBox="0 0 6 12">
                      <path d="M0 9h6l-3 3z" fill="#8a8a8a" />
                    </svg>
                  )}
                </RibbonButton>
              ))}
            </RibbonItems>
            <RibbonCaption>{g.caption}</RibbonCaption>
          </RibbonGroup>
        ))}
      </Ribbon>

      <Workspace>
        <Sidebar>
          <MenuToggle aria-label="Menu">
            <svg width="12" height="10" viewBox="0 0 12 10">
              <path d="M0 1h12M0 5h12M0 9h12" stroke="#3c8dbc" strokeWidth="2" />
            </svg>
          </MenuToggle>
          <SideMenu>
            {sideItems.map((s, i) => (
              <SideItem key={s.label}>
                <SideLink href="#" $active={i === 0}>
                  {s.icon}
                  <span>{s.label}</span>
                </SideLink>
              </SideItem>
            ))}
          </SideMenu>
          <Brand>
            <svg width="36" height="43" viewBox="0 0 36 43">
              <defs>
                <linearGradient id="barRed" x1="0" y1="0" x2="0" y2="1">
                  <stop offset="0" stopColor="#e8a898" />
                  <stop offset="1" stopColor="#c3150b" />
                </linearGradient>
                <linearGradient id="barGreen" x1="0" y1="0" x2="0" y2="1">
                  <stop offset="0" stopColor="#a5ec2b" />
                  <stop offset="1" stopColor="#0b7a14" />
                </linearGradient>
                <linearGradient id="barGold" x1="0" y1="0" x2="0" y2="1">
                  <stop offset="0" stopColor="#fff0b8" />
                  <stop offset="1" stopColor="#fca21d" />
                </linearGradient>
              </defs>
              <rect x="1.500" y="13.500" width="9" height="23" fill="url(#barRed)" stroke="#e8793b" strokeWidth="1.500" />
              <rect x="13.500" y="9.500" width="9" height="27" fill="url(#barGreen)" stroke="#7fdf2a" strokeWidth="1.500" />
              <rect x="26" y="1.500" width="9" height="35" fill="url(#barGold)" stroke="#f5c04a" strokeWidth="1.500" />
              <path d="M1 39h10v4H1z" fill="#6b2a20" />
              <path d="M13 39h10v4H13z" fill="#24601f" />
              <path d="M25.500 39h10v4h-10z" fill="#77592a" />
            </svg>
            <BrandText>
              <BrandName>rafsoft<BrandLight>net</BrandLight></BrandName>
              <BrandTag>Oprogramowanie dla firm</BrandTag>
            </BrandText>
          </Brand>
        </Sidebar>

        <Main>
          {cards.map((c) => (
            <Card key={c.title}>
              <CardHeader>
                {c.icon}
                <CardTitle>{c.title}</CardTitle>
                <CollapseButton aria-label="Zwiń">
                  <CollapseMark />
                </CollapseButton>
              </CardHeader>
              <CardList>
                {c.items.map(([icon, label], i) => (
                  <CardItem key={label} $hover={c.hover === i}>
                    <CardLink href="#" $hover={c.hover === i}>
                      <Glyph name={icon} />
                      {label}
                    </CardLink>
                  </CardItem>
                ))}
              </CardList>
            </Card>
          ))}
          <NewsCard>
            <NewsTabs>
              <NewsTab $active>
                <FaInfoCircle size={15} />
                Ważne
              </NewsTab>
              <NewsTab>
                <FaRegNewspaper size={19} />
                Aktualności
              </NewsTab>
            </NewsTabs>
            <NewsScroller>
              <NewsBody>
                <NewsLine>Witaj w programie Faktura VAT 2023 PRO</NewsLine>
                <NewsLine $thick>Dzisiaj jest 09 listopad 2022 .</NewsLine>
                <NewsLine>
                  Ostatnia archiwizacja: <NewsLink href="#">02-03-2007</NewsLink>
                </NewsLine>
                <NewsHeading>SPRZEDAŻ</NewsHeading>
                <NewsLine>Miesiąc listopad netto 0,00 zł , brutto 0,00 zł</NewsLine>
                <NewsLine>W poprzednim miesiącu netto: 0,00 zł , brutto 0,00 zł</NewsLine>
                <NewsLine>Największa w 02-2022 brutto 12200,00 zł</NewsLine>
                <NewsHeading>NALEŻNOŚCI</NewsHeading>
              </NewsBody>
              <ScrollTrack>
                <ScrollButton aria-label="W górę">
                  <svg width="12" height="8" viewBox="0 0 12 8">
                    <path d="M1 7l5-5 5 5" fill="none" stroke="#555" strokeWidth="2.600" />
                  </svg>
                </ScrollButton>
                <ScrollThumb />
                <ScrollButton $down aria-label="W dół">
                  <svg width="12" height="8" viewBox="0 0 12 8">
                    <path d="M1 1l5 5 5-5" fill="none" stroke="#555" strokeWidth="2.600" />
                  </svg>
                </ScrollButton>
              </ScrollTrack>
            </NewsScroller>
          </NewsCard>
        </Main>
      </Workspace>

      <Copyright>Copyright 2022 by RAFSOFT.NET. Wszystkie prawa zastrzeżone.</Copyright>
      <StatusBar>
        <StatusDate>2022-11-09</StatusDate>
      </StatusBar>

      <ToolWindow aria-label="Dodatki">
        <ToolTitleBar>
          <svg width="11" height="16" viewBox="0 0 11 16" fill="none" stroke="#111">
            <path d="M2 12V4q0-3 3.500-3T9 4v8q0 3-3.500 3T2 12z" strokeWidth="1.800" />
            <path d="M4.500 12V5.500q0-1 1-1t1 1V12" strokeWidth="1.200" />
          </svg>
          <ToolTitle>Dodatki</ToolTitle>
          <button aria-label="Zamknij okno">
            <svg width="12" height="12" viewBox="0 0 12 12">
              <path d="M1 1l10 10M11 1L1 11" stroke="#111" strokeWidth="1.200" />
            </svg>
          </button>
        </ToolTitleBar>
        <ToolList>
          {tools.map((t) => (
            <ToolButton key={t.icon} aria-label={t.label} $spaced={t.spaced}>
              <svg width="32" height="32" viewBox="0 0 32 32" shapeRendering="crispEdges">
                {toolIcons[t.icon]}
              </svg>
            </ToolButton>
          ))}
        </ToolList>
      </ToolWindow>
    </Shell>
  );
}
